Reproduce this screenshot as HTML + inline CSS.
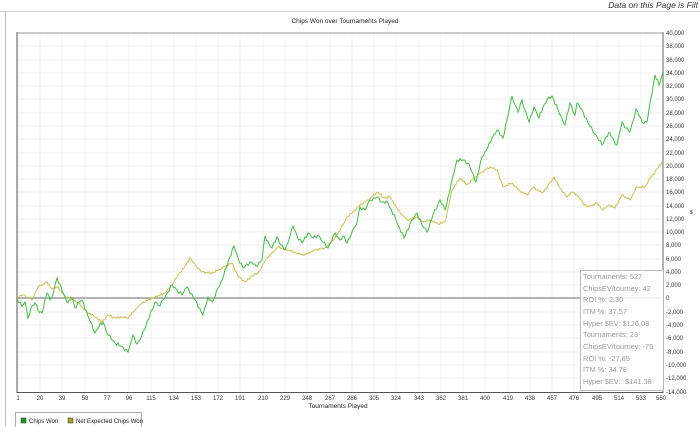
<!DOCTYPE html>
<html><head><meta charset="utf-8"><style>
html,body{margin:0;padding:0;background:#fff;width:700px;height:427px;overflow:hidden;font-family:"Liberation Sans",sans-serif}
</style></head><body>
<svg width="700" height="427" viewBox="0 0 700 427" xmlns="http://www.w3.org/2000/svg" font-family="Liberation Sans, sans-serif">
<rect width="700" height="427" fill="#fff"/>
<text x="698" y="8" text-anchor="end" font-size="8.5" font-style="italic" fill="#333">Data on this Page is Filt</text>
<line x1="0" y1="11.5" x2="700" y2="11.5" stroke="#d0d0d0"/>
<line x1="5.5" y1="12" x2="5.5" y2="427" stroke="#bbb"/>
<text x="345" y="23" text-anchor="middle" font-size="6.5" fill="#222">Chips Won over Tournaments Played</text>
<g stroke="#f0f0f0" stroke-width="1">
<path d="M18 33V392M40 33V392M62 33V392M85 33V392M107 33V392M129 33V392M151 33V392M174 33V392M196 33V392M218 33V392M240 33V392M263 33V392M285 33V392M307 33V392M330 33V392M352 33V392M374 33V392M396 33V392M419 33V392M441 33V392M463 33V392M485 33V392M508 33V392M530 33V392M552 33V392M574 33V392M597 33V392M619 33V392M641 33V392"/>
<path d="M18 46H663M18 60H663M18 73H663M18 86H663M18 99H663M18 113H663M18 126H663M18 139H663M18 153H663M18 166H663M18 179H663M18 192H663M18 206H663M18 219H663M18 232H663M18 245H663M18 259H663M18 272H663M18 285H663M18 312H663M18 325H663M18 338H663M18 352H663M18 365H663M18 378H663"/>
</g>
<line x1="17" y1="33" x2="663" y2="33" stroke="#999"/>
<line x1="17" y1="32" x2="17" y2="393" stroke="#aaa" stroke-width="2"/>
<line x1="663" y1="32" x2="663" y2="393" stroke="#999" stroke-width="1.5"/>
<line x1="17" y1="392.5" x2="663" y2="392.5" stroke="#555"/>
<line x1="17" y1="298" x2="663" y2="298" stroke="#888" stroke-width="1.2"/>
<g font-size="6" fill="#333">
<text x="666" y="35">40,000</text><text x="666" y="48">38,000</text><text x="666" y="62">36,000</text><text x="666" y="75">34,000</text><text x="666" y="88">32,000</text><text x="666" y="101">30,000</text><text x="666" y="115">28,000</text><text x="666" y="128">26,000</text><text x="666" y="141">24,000</text><text x="666" y="155">22,000</text><text x="666" y="168">20,000</text><text x="666" y="181">18,000</text><text x="666" y="194">16,000</text><text x="666" y="208">14,000</text><text x="666" y="221">12,000</text><text x="666" y="234">10,000</text><text x="666" y="247">8,000</text><text x="666" y="261">6,000</text><text x="666" y="274">4,000</text><text x="666" y="287">2,000</text><text x="666" y="300">0</text><text x="666" y="314">-2,000</text><text x="666" y="327">-4,000</text><text x="666" y="340">-6,000</text><text x="666" y="354">-8,000</text><text x="666" y="367">-10,000</text><text x="666" y="380">-12,000</text><text x="666" y="394">-14,000</text>
<text x="690" y="214" font-size="5">$</text>
</g>
<g font-size="6" fill="#333" text-anchor="middle">
<text x="18" y="400">1</text><text x="40" y="400">20</text><text x="62" y="400">39</text><text x="85" y="400">58</text><text x="107" y="400">77</text><text x="129" y="400">96</text><text x="151" y="400">115</text><text x="174" y="400">134</text><text x="196" y="400">153</text><text x="218" y="400">172</text><text x="240" y="400">191</text><text x="263" y="400">210</text><text x="285" y="400">229</text><text x="307" y="400">248</text><text x="330" y="400">267</text><text x="352" y="400">286</text><text x="374" y="400">305</text><text x="396" y="400">324</text><text x="419" y="400">343</text><text x="441" y="400">362</text><text x="463" y="400">381</text><text x="485" y="400">400</text><text x="508" y="400">419</text><text x="530" y="400">438</text><text x="552" y="400">457</text><text x="574" y="400">476</text><text x="597" y="400">495</text><text x="619" y="400">514</text><text x="641" y="400">533</text><text x="661" y="400">550</text>
<text x="338" y="408" font-size="6.5" fill="#222">Tournaments Played</text>
</g>
<polyline id="ol" fill="none" stroke="#c8c050" stroke-width="1" points="17,297 23,295 32,300 38,287 47,282 52,289 58,287 65,297 72,298 78,303 87,312 94,316 102,322 108,315 115,318 122,317 128,318 135,310 142,303 153,298 165,293 172,285 178,275 184,268 190,258 196,266 202,272 212,273 222,268 232,263 238,276 245,282 252,276 258,273 267,258 278,247 288,250 296,253 305,255 315,250 325,248 335,238 343,225 347,217 353,212 360,205 368,200 378,192 384,198 390,197 398,210 407,220 417,217 423,222 430,220 438,224 445,222 452,190 460,178 467,185 475,177 482,172 490,167 497,170 503,187 512,183 520,191 527,195 533,187 542,193 548,186 554,177 560,188 567,197 572,192 577,195 583,203 588,207 597,203 603,210 609,205 615,208 622,195 630,200 637,187 645,187 650,178 655,172 662,162"/>
<polyline id="gr" fill="none" stroke="#44bb44" stroke-width="1" points="17,298 22,306 25,302 28,318 31,308 35,303 38,310 42,313 45,300 47,293 50,300 52,297 57,278 62,290 68,303 72,298 75,308 79,302 82,300 88,316 95,333 99,326 103,322 108,335 115,343 121,346 128,352 131,342 133,335 137,344 140,340 144,330 148,320 152,310 155,302 160,306 163,300 168,292 172,285 177,290 182,295 185,289 187,287 195,300 203,315 206,305 208,297 212,302 215,297 218,288 222,280 228,262 234,246 238,258 243,268 250,262 256,266 262,260 265,236 269,244 272,248 277,237 281,245 285,250 290,236 293,226 297,236 302,243 308,233 313,238 318,235 323,242 328,248 335,233 340,240 343,236 347,243 352,232 357,223 360,207 365,210 370,200 377,197 382,202 388,203 396,220 404,238 410,224 417,213 422,225 427,232 433,215 440,200 445,210 451,185 457,160 463,160 468,163 472,172 476,182 482,157 488,147 492,138 497,130 503,138 507,120 512,96 515,105 518,112 522,100 525,110 529,122 534,107 539,118 543,107 547,100 552,96 558,110 565,125 570,103 575,115 577,103 583,112 588,123 595,134 602,145 606,137 610,133 614,141 617,145 622,122 626,128 630,132 633,121 636,109 642,122 647,122 651,98 655,75 659,85 663,72"/>
<rect x="580.5" y="270.5" width="83" height="120" fill="#fff" fill-opacity="0.85" stroke="#bbb"/>
<g font-size="7.4" fill="#999">
<text x="583" y="279">Tournaments: 527</text>
<text x="583" y="291">ChipsEV/tourney: 42</text>
<text x="583" y="302">ROI %: 2.30</text>
<text x="583" y="314">ITM %: 37.57</text>
<text x="583" y="326">Hyper $EV: $126.08</text>
<text x="583" y="337">Tournaments: 23</text>
<text x="583" y="349">ChipsEV/tourney: -75</text>
<text x="583" y="361">ROI %: -27.65</text>
<text x="583" y="372">ITM %: 34.78</text>
<text x="583" y="384">Hyper $EV: -$141.38</text>
</g>
<rect x="15.5" y="412.5" width="126" height="20" fill="#fff" stroke="#aaa"/>
<rect x="21" y="418" width="5" height="5" fill="#1a9a1a" stroke="#333" stroke-width="0.5"/>
<text x="29" y="423" font-size="6" fill="#222">Chips Won</text>
<rect x="68" y="418" width="5" height="5" fill="#a8a020" stroke="#333" stroke-width="0.5"/>
<text x="76" y="423" font-size="6" fill="#222">Net Expected Chips Won</text>
</svg>
<script>
function jag(id,amp,step){
  var el=document.getElementById(id);
  var pts=el.getAttribute('points').trim().split(/\s+/).map(function(p){var a=p.split(',');return [+a[0],+a[1]];});
  var out=[pts[0]],k=0;
  for(var i=1;i<pts.length;i++){
    var a=pts[i-1],b=pts[i],n=Math.max(1,Math.round((b[0]-a[0])/step));
    for(var j=1;j<=n;j++){
      var t=j/n,x=a[0]+(b[0]-a[0])*t,y=a[1]+(b[1]-a[1])*t;
      if(j<n){k++;y+=(k%2?amp:-amp)*(0.6+0.4*Math.sin(k*1.7));}
      out.push([x,y]);
    }
  }
  el.setAttribute('points',out.map(function(p){return p[0].toFixed(1)+','+p[1].toFixed(1);}).join(' '));
}
jag('gr',1.8,1.6);jag('ol',1.0,1.4);
</script>
</body></html>
